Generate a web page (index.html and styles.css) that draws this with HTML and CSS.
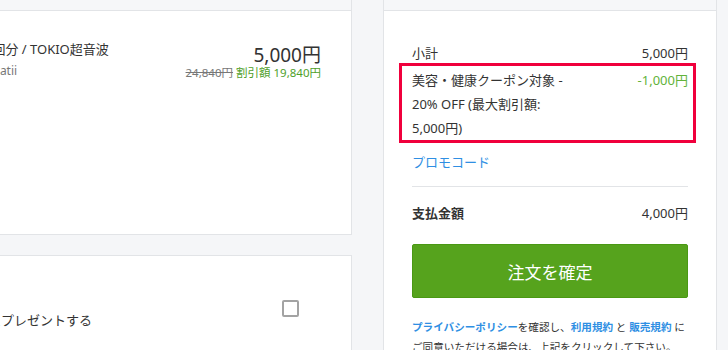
FILE: index.html
```html
<!DOCTYPE html>
<html lang="ja">
<head>
    <meta charset="UTF-8">
    <meta name="viewport" content="width=device-width, initial-scale=1.0">
    <title>注文内容の確認</title>
    <link rel="stylesheet" href="styles.css">
</head>
<body>
    <div class="page">
        <div class="main">
            <div class="card item-card">
                <div class="card-head"></div>
                <div class="item">
                    <div class="item-info">
                        <p class="item-name">1回分 / TOKIO超音波</p>
                        <p class="item-shop">Matii</p>
                    </div>
                    <div class="item-price">
                        <p class="price">5,000円</p>
                        <p class="price-note"><s>24,840円</s> <span class="green">割引額 19,840円</span></p>
                    </div>
                </div>
            </div>
            <div class="card gift-card">
                <div class="gift">
                    <p class="gift-label">にプレゼントする</p>
                    <span class="checkbox"></span>
                </div>
            </div>
        </div>
        <div class="card summary">
            <div class="card-head"></div>
            <div class="summary-body">
                <div class="row subtotal">
                    <span>小計</span>
                    <span>5,000円</span>
                </div>
                <div class="coupon">
                    <span class="coupon-name">美容・健康クーポン対象 - 20% OFF (最大割引額: 5,000円)</span>
                    <span class="coupon-value">-1,000円</span>
                </div>
                <a class="promo" href="#">プロモコード</a>
                <hr>
                <div class="row total">
                    <span class="total-label">支払金額</span>
                    <span>4,000円</span>
                </div>
                <button type="button" class="confirm">注文を確定</button>
                <p class="terms"><a href="#">プライバシーポリシー</a>を確認し、<a href="#">利用規約</a> と <a href="#">販売規約</a> にご同意いただける場合は、上記をクリックして下さい。</p>
            </div>
        </div>
    </div>
</body>
</html>
```

FILE: styles.css
```css
* {
    margin: 0;
    padding: 0;
    box-sizing: border-box;
}
body {
    background: #f5f6f8;
    font-family: "Noto Sans", "Noto Sans CJK JP", sans-serif;
    color: #333;
    overflow: hidden;
    height: 350px;
}
a {
    color: #2f8fe3;
    text-decoration: none;
}
.page {
    display: flex;
    align-items: flex-start;
    gap: 31px;
    margin-top: -1px;
    margin-left: -1px;
}
.main {
    width: 353px;
    display: flex;
    flex-direction: column;
    gap: 20px;
}
.card {
    background: #fff;
    border: 1px solid #e2e4e7;
}
.card-head {
    height: 11px;
    background: #f6f7f9;
    border-bottom: 1px solid #e2e4e7;
}
.item-card {
    height: 236px;
}
.item {
    display: flex;
    justify-content: space-between;
    padding: 28px 30px 0 0;
}
.item-info {
    margin-left: -15px;
}
.item-name {
    font-size: 13px;
    line-height: 20px;
}
.item-shop {
    margin-top: 2px;
    font-size: 12px;
    line-height: 20px;
    color: #777;
    text-indent: 4px;
}
.item-price {
    text-align: right;
}
.price {
    padding-top: 5px;
    font-size: 19px;
    line-height: 22px;
}
.price-note {
    font-size: 11.5px;
    line-height: 14px;
}
.price-note s {
    color: #777;
}
.green {
    color: #4f9f2a;
}
.gift-card {
    height: 120px;
}
.gift {
    display: flex;
    justify-content: space-between;
    align-items: flex-start;
    padding: 44px 52px 0 0;
}
.gift-label {
    font-size: 13px;
    line-height: 20px;
    margin: 10px 0 0 -12px;
}
.checkbox {
    width: 17px;
    height: 17px;
    border: 2px solid #a3a3a3;
    border-radius: 2px;
}
.summary {
    width: 334px;
    height: 400px;
}
.summary-body {
    display: flex;
    flex-direction: column;
    padding: 32px 28px 0 28px;
    font-size: 13px;
}
.row {
    display: flex;
    justify-content: space-between;
    line-height: 22px;
}
.subtotal {
    line-height: 20px;
}
.coupon {
    display: flex;
    justify-content: space-between;
    align-items: flex-start;
    gap: 20px;
    margin: 0 -8px 0 -13px;
    padding: 2px 5px 0 10px;
    border: 3px solid #f0003c;
    line-height: 24px;
}
.coupon-name {
    max-width: 160px;
}
.coupon-value {
    color: #62b33a;
    white-space: nowrap;
}
.promo {
    margin-top: 8px;
    line-height: 22px;
    align-self: flex-start;
}
hr {
    border: none;
    border-top: 1px solid #e2e4e7;
    margin-top: 13px;
}
.total {
    margin-top: 15px;
}
.total-label {
    font-weight: bold;
}
.confirm {
    margin-top: 20px;
    height: 54px;
    background: #56a31d;
    border: 1px solid #4a9814;
    border-radius: 2px;
    color: #fff;
    font-family: "Noto Sans", "Noto Sans CJK JP", sans-serif;
    font-size: 17px;
}
.terms {
    margin-top: 19px;
    font-size: 10.6px;
    line-height: 20px;
}
.terms a {
    font-weight: bold;
}
```
